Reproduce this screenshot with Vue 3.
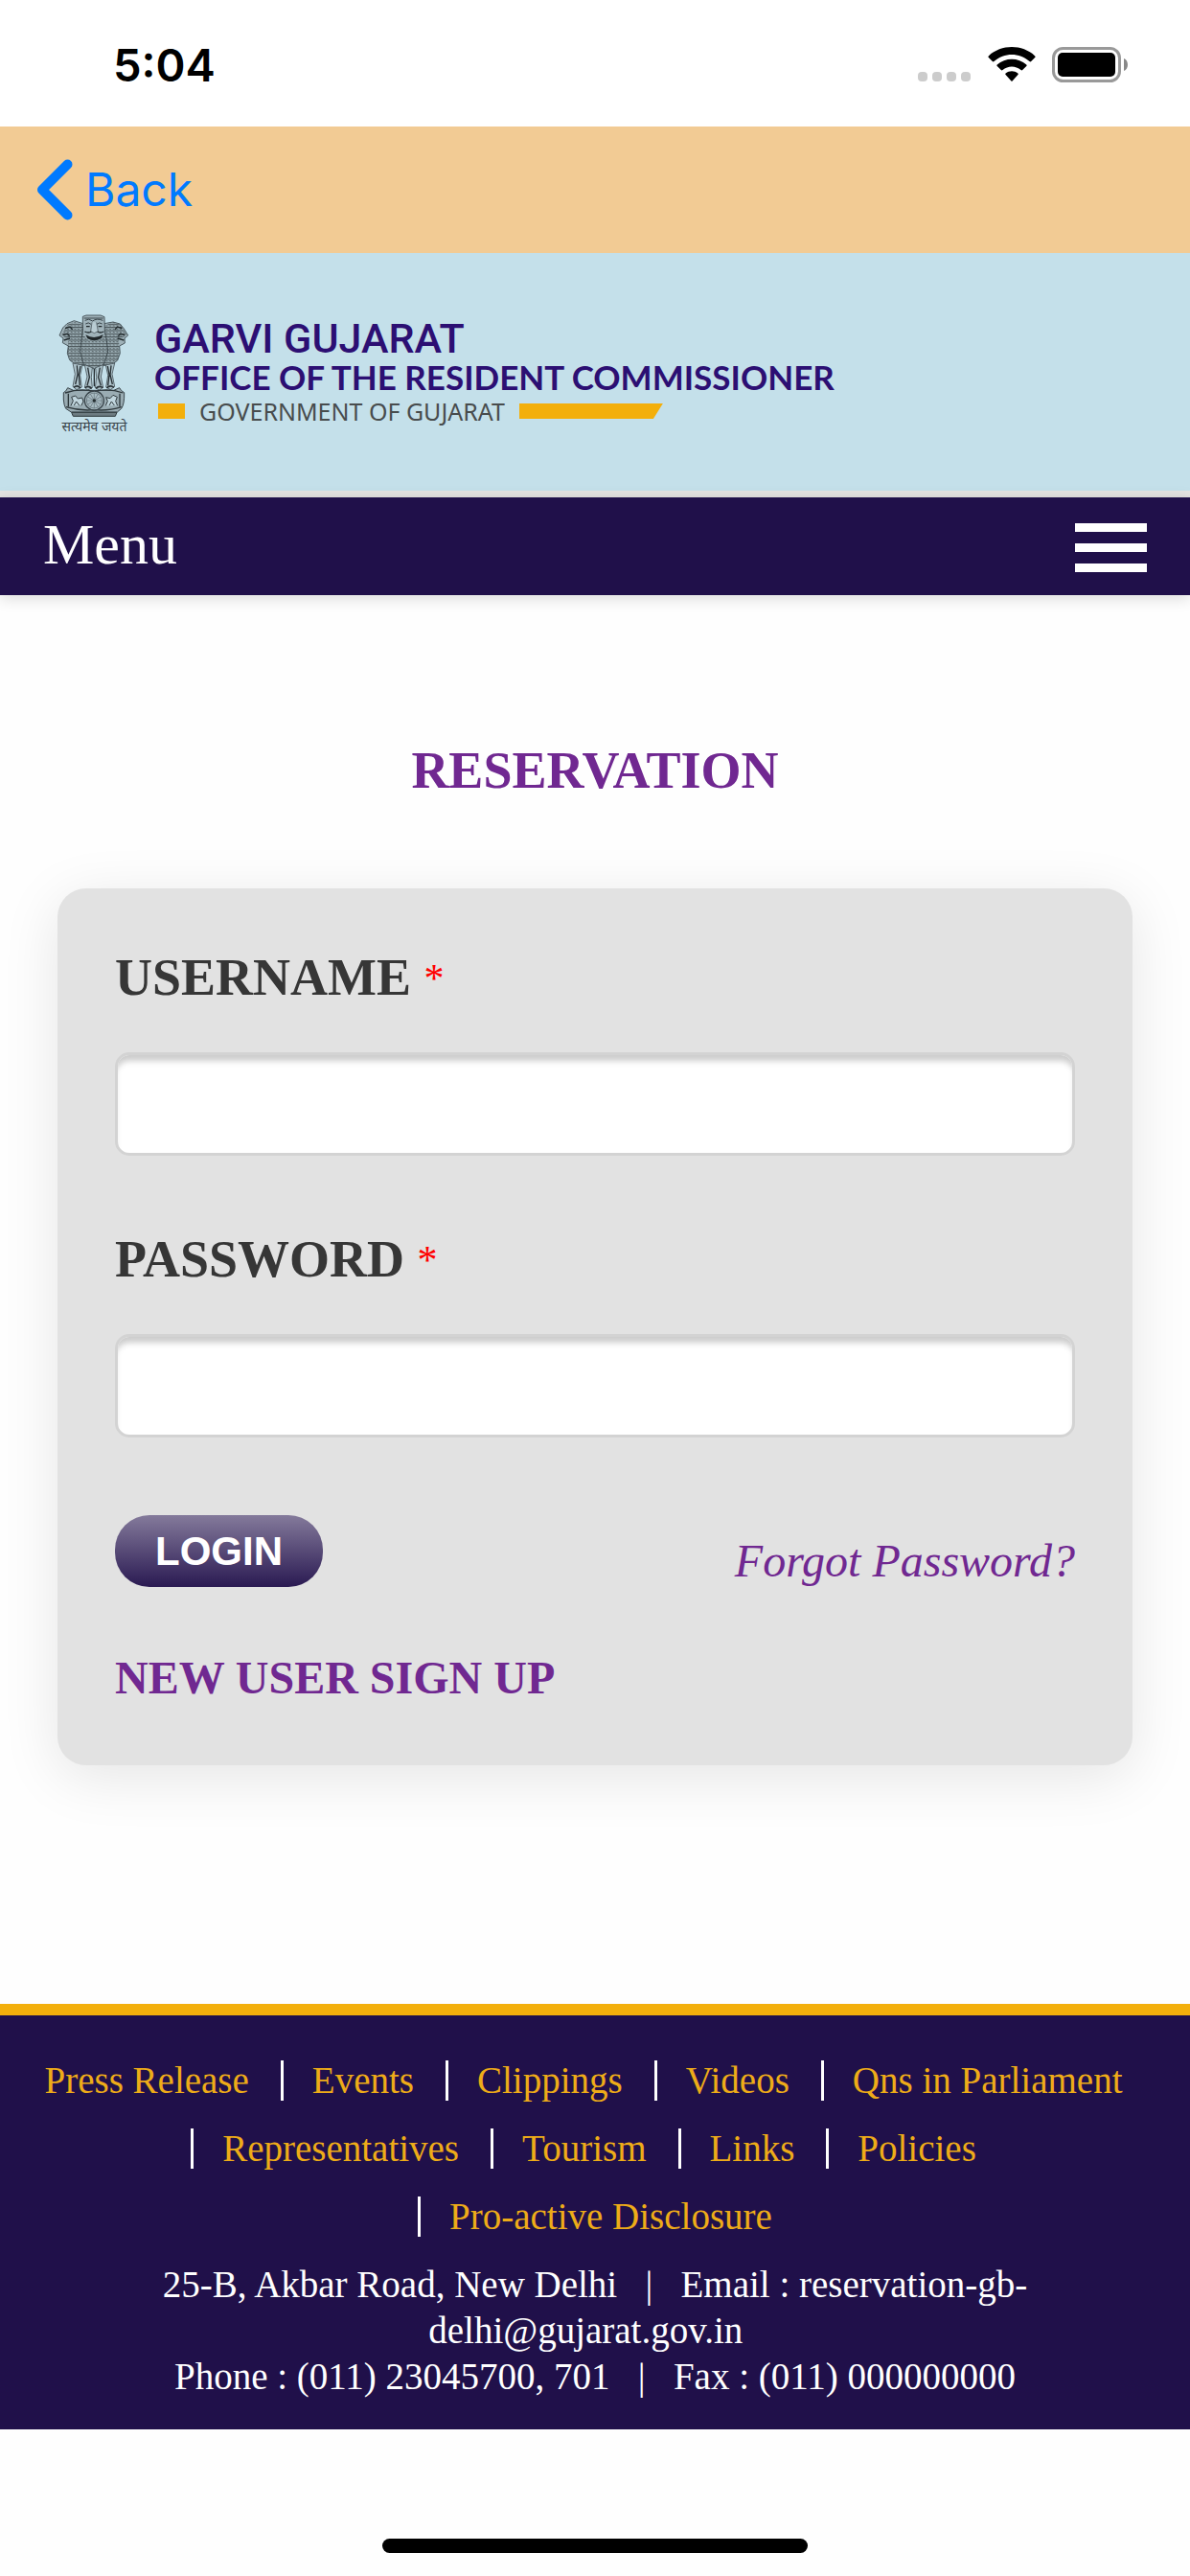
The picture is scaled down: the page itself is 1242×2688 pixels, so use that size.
<template>
  <div class="page">
    <div class="status-bar">
      <span class="time">5:04</span>
      <div class="status-icons">
        <svg class="signal" viewBox="0 0 55 10">
          <rect v-for="n in 4" :key="n" :x="(n - 1) * 15" y="0" width="10" height="10" rx="4" fill="#cccccc"/>
        </svg>
        <svg class="wifi" viewBox="0 0 50 37">
          <path d="M0.8 10.9a1 1 0 0 1 0-1.5C14-3 36-3 49.2 9.400a1 1 0 0 1 0 1.500L45.200 15a1.200 1.200 0 0 1-1.700 0C33 5.600 17 5.600 6.500 15a1.200 1.200 0 0 1-1.700 0z"/>
          <path d="M9.700 20a1.100 1.100 0 0 1 0-1.600C18.300 10.700 31.700 10.700 40.300 18.400a1.100 1.100 0 0 1 0 1.600L36.200 24.100a1.200 1.200 0 0 1-1.700 0C29 19.300 21 19.300 15.500 24.100a1.200 1.200 0 0 1-1.700 0z"/>
          <path d="M18.600 28.900a1 1 0 0 1 0-1.500C22.300 24.600 27.700 24.600 31.400 27.400a1 1 0 0 1 0 1.500L25.600 35.400a0.800 0.800 0 0 1-1.200 0z"/>
        </svg>
        <svg class="battery" viewBox="0 0 80 37">
          <rect x="1.500" y="1.500" width="69" height="34" rx="10" fill="none" stroke="#999999" stroke-width="3"/>
          <rect x="6" y="6" width="60" height="25" rx="5"/>
          <path d="M75 12C80.300 14 80.300 23 75 25z" fill="#888888"/>
        </svg>
      </div>
    </div>

    <div class="nav-bar">
      <button class="back" type="button">
        <svg class="chevron" viewBox="0 0 38 64">
          <path d="M32.500 5.500L6 32L32.500 58.500" fill="none" stroke="#007aff" stroke-width="10" stroke-linecap="round" stroke-linejoin="round"/>
        </svg>
        <span>Back</span>
      </button>
    </div>

    <header class="header">
      <div class="emblem">
        <svg class="lions" viewBox="60 80 231 330">
          <defs>
            <pattern id="curls" width="11" height="10" patternUnits="userSpaceOnUse">
              <path d="M0 2Q3 9 6 2Q8 8 11 3M2 8Q5 12 8 7" fill="none" stroke="#2c3437" stroke-width="2.200"/>
            </pattern>
          </defs>
          <g fill="#9fb2b9" stroke="#39444a" stroke-width="2.500" stroke-linejoin="round">
            <!-- side lions -->
            <path d="M140 112L112 103L90 112L77 125L66 149L78 158L76 172L94 182L91 205L98 226L120 243L145 240Z"/>
            <path d="M206 112L234 107L256 113L268 128L281 149L270 158L271 173L254 182L256 205L248 227L228 243L201 240Z"/>
            <!-- middle lion -->
            <path d="M139 90L150 86L195 86L207 91L208 135L214 165L218 200L205 240L175 254L142 240L131 200L135 160L139 135Z"/>
          </g>
          <path d="M112 106L90 116L72 149L94 160L92 205L100 226L122 241L175 252L226 241L248 226L254 205L252 160L278 149L258 116L234 108L208 118L206 150L190 165L158 165L142 150L139 116Z" fill="url(#curls)"/>
          <path d="M143 95H203M146 102Q158 94 170 104Q182 94 202 102M148 113Q157 106 165 114M183 114Q191 106 200 113" fill="none" stroke="#39444a" stroke-width="3"/>
          <path d="M168 108L164 136L175 142L187 136L182 108" fill="#b9ccd3" stroke="#39444a" stroke-width="2"/>
          <path d="M150 121H161M188 121H199M145 137Q158 143 166 137M185 137Q194 143 205 137" fill="none" stroke="#20282b" stroke-width="4"/>
          <path d="M148 147Q175 163 203 146L198 158Q175 171 154 159Z" fill="#1f2629"/>
          <path d="M84 127L99 122L107 130M77 148L91 144L98 151M80 164L99 158M262 127L248 122L240 130M270 148L257 144L250 151M268 164L248 158" fill="none" stroke="#222b2e" stroke-width="4"/>
          <!-- legs -->
          <g fill="#aec3cb" stroke="#48545a" stroke-width="2.500">
            <path d="M108 236L115 270L108 309L120 319L136 311L131 274L138 242Z"/>
            <path d="M145 241L153 278L145 311L154 320L169 313L166 280L169 250Z"/>
            <path d="M179 250L182 280L178 313L191 320L203 312L196 278L203 241Z"/>
            <path d="M211 242L218 274L212 311L226 319L239 309L231 270L239 236Z"/>
          </g>
          <path d="M121 243L123 272L116 302M132 245L127 272L130 306M155 250L160 280L153 306M175 253V309M193 250L188 280L196 306M217 245L222 272L218 306M228 243L225 272L232 302" fill="none" stroke="#273034" stroke-width="4"/>
          <path d="M111 312Q122 302 132 314M146 313Q157 304 167 315M180 315Q191 304 202 313M214 314Q225 302 237 312" fill="none" stroke="#273034" stroke-width="5"/>
          <!-- abacus with the wheel -->
          <path d="M92 313Q88 324 79 328V350Q80 367 86 378L103 389H247L260 378Q270 364 269 328Q258 323 254 313L236 321H110Z" fill="#9aacb3" stroke="#39444a" stroke-width="3"/>
          <path d="M84 329Q130 313 175 324Q222 313 265 329M87 373Q130 386 175 382Q220 386 260 373M94 331V372M255 331V372" fill="none" stroke="#2e383c" stroke-width="4"/>
          <circle cx="175" cy="353" r="30" fill="#a9bcc3" stroke="#39444a" stroke-width="4"/>
          <circle cx="175" cy="353" r="24" fill="none" stroke="#56636a" stroke-width="2"/>
          <path v-for="n in 12" :key="n" d="M175 353V329" stroke="#64727a" stroke-width="2" :transform="`rotate(${n * 30} 175 353)`"/>
          <circle cx="175" cy="353" r="5" fill="#252e31"/>
          <path d="M102 369L109 354L104 342L116 338L124 347L137 344L141 356L134 369M112 368L119 356L129 369" fill="#c0d5dd" stroke="#303a3e" stroke-width="3"/>
          <path d="M211 369L217 355L212 343L225 346L234 336L247 342L242 355L248 369M222 368L229 356L238 368" fill="#c0d5dd" stroke="#303a3e" stroke-width="3"/>
          <path d="M104 390H246L241 402H109Z" fill="#6d7b81" stroke="#2e383c" stroke-width="3"/>
        </svg>
        <span class="motto">सत्यमेव जयते</span>
      </div>
      <div class="brand">
        <div class="brand-name">GARVI GUJARAT</div>
        <div class="brand-office">OFFICE OF THE RESIDENT COMMISSIONER</div>
        <div class="brand-gov">
          <span class="block"></span>
          <span>GOVERNMENT OF GUJARAT</span>
          <span class="ribbon"></span>
        </div>
      </div>
    </header>

    <nav class="menu">
      <span>Menu</span>
      <button class="hamburger" type="button" aria-label="Menu" @click="menuOpen = !menuOpen">
        <i></i>
        <i></i>
        <i></i>
      </button>
    </nav>

    <main class="main">
      <h1>RESERVATION</h1>
      <form class="card" @submit.prevent>
        <div class="form-item">
          <label for="username">USERNAME <span class="required">*</span></label>
          <input id="username" type="text" v-model="username"/>
        </div>
        <div class="form-item">
          <label for="password">PASSWORD <span class="required">*</span></label>
          <input id="password" type="password" v-model="password"/>
        </div>
        <div class="actions">
          <button class="login" type="submit">LOGIN</button>
          <a class="forgot" href="#">Forgot Password?</a>
        </div>
        <a class="sign-up" href="#">NEW USER SIGN UP</a>
      </form>
    </main>

    <footer class="footer">
      <ul class="links">
        <li v-for="link in links" :key="link"><a href="#">{{ link }}</a></li>
      </ul>
      <p class="address">
        25-B, Akbar Road, New Delhi &nbsp; | &nbsp; Email : reservation-gb-delhi@gujarat.gov.in&nbsp;&nbsp;<br>
        Phone : (011) 23045700, 701 &nbsp; | &nbsp; Fax : (011) 000000000
      </p>
    </footer>

    <div class="home-indicator"></div>
  </div>
</template>

<script setup>
import {ref} from 'vue'

const username = ref('')
const password = ref('')
const menuOpen = ref(false)

const links = [
  'Press Release',
  'Events',
  'Clippings',
  'Videos',
  'Qns in Parliament',
  'Representatives',
  'Tourism',
  'Links',
  'Policies',
  'Pro-active Disclosure'
]
</script>

<style>
body {
  margin: 0;
  background: #fefefe;
}
</style>

<style scoped>
.page {
  display: flex;
  flex-direction: column;
  min-height: 100vh;
  font-family: "Liberation Serif", "Times New Roman", serif;
}

a {
  text-decoration: none;
}

button {
  border: none;
  padding: 0;
  background: none;
  cursor: pointer;
}

.status-bar {
  display: flex;
  justify-content: space-between;
  height: 132px;
  padding: 0 64px 0 118px;
  box-sizing: border-box;
  background: #ffffff;
}

.time {
  font: 600 47px/136px Inter, sans-serif;
}

.status-icons {
  display: flex;
  align-items: flex-end;
  height: 86px;
}

.signal {
  width: 55px;
  height: 10px;
  margin: 0 18px 1px 0;
}

.wifi {
  width: 50px;
  height: 37px;
  margin-right: 17px;
}

.battery {
  width: 80px;
  height: 37px;
}

.nav-bar {
  display: flex;
  align-items: center;
  height: 132px;
  padding-left: 38px;
  background: #f2cb94;
}

.back {
  display: flex;
  align-items: center;
  gap: 13px;
  color: #007aff;
  font: 400 48px/60px Inter, sans-serif;
}

.chevron {
  width: 38px;
  height: 64px;
}

.header {
  display: flex;
  gap: 24px;
  padding: 63px 60px 60px;
  border-bottom: 7px solid #e4e3e2;
  background: #c4e0ea;
}

.emblem {
  display: flex;
  flex-direction: column;
  align-items: center;
  width: 77px;
}

.lions {
  width: 77px;
  height: 110px;
}

.motto {
  color: #39444a;
  font: 400 14px/15px "Noto Sans", "Noto Sans Devanagari", sans-serif;
  white-space: nowrap;
}

.brand {
  padding-top: 4px;
  color: #2c0f73;
  white-space: nowrap;
}

.brand-name {
  font: 500 43px/44px Roboto, sans-serif;
}

.brand-office {
  font: 700 35px/36px Lato, sans-serif;
}

.brand-gov {
  display: flex;
  align-items: center;
  gap: 15px;
  padding-left: 4px;
  color: #484c4d;
  font: 400 25px/36px "Noto Sans", sans-serif;
}

.block {
  width: 28px;
  height: 16px;
  background: #f3af0b;
}

.ribbon {
  width: 150px;
  height: 16px;
  background: #f3af0b;
  clip-path: polygon(0 0, 100% 0, 140px 100%, 0 100%);
}

.menu {
  display: flex;
  justify-content: space-between;
  align-items: flex-start;
  height: 102px;
  padding: 0 45px;
  background: #20104a;
  box-shadow: 0 3px 15px rgba(0, 0, 0, 0.15);
  color: #ffffff;
  font-size: 60px;
  line-height: 98px;
}

.hamburger {
  display: flex;
  flex-direction: column;
  gap: 12px;
  width: 75px;
  margin-top: 27px;
}

.hamburger i {
  width: 100%;
  height: 9px;
  background: #ffffff;
}

.main {
  padding: 153px 60px 249px;
}

h1 {
  margin: 0 0 93px;
  color: #702891;
  font-size: 54px;
  line-height: 60px;
  text-align: center;
}

.card {
  padding: 63px 60px 64px;
  border-radius: 30px;
  background: #e2e2e2;
  box-shadow: 0 12px 60px rgba(0, 0, 0, 0.1);
}

.form-item {
  margin-bottom: 78px;
}

label {
  display: block;
  margin-bottom: 48px;
  color: #363636;
  font-size: 54px;
  font-weight: 700;
  line-height: 60px;
}

.required {
  color: #ff0000;
  font-size: 42px;
  font-weight: 400;
  line-height: 1;
  vertical-align: 3px;
}

input {
  display: block;
  width: 100%;
  height: 108px;
  padding: 0 24px;
  box-sizing: border-box;
  border: 3px solid #d3d3d3;
  border-radius: 15px;
  background: #ffffff;
  box-shadow: inset 0 9px 6px -3px #cccccc;
  font: 48px "Liberation Serif", serif;
  outline: none;
}

.actions {
  display: flex;
  justify-content: space-between;
  align-items: flex-end;
  margin: 81px 0 68px;
}

.login {
  height: 75px;
  padding: 0 42px;
  border-radius: 36px;
  background: linear-gradient(#847a9b, #2a1a52);
  color: #ffffff;
  font: 700 42px/75px "Liberation Sans", Arial, sans-serif;
}

.forgot {
  color: #702891;
  font-size: 48px;
  font-style: italic;
  line-height: 54px;
}

.sign-up {
  display: block;
  color: #702891;
  font-size: 48px;
  font-weight: 700;
  line-height: 54px;
}

.footer {
  padding: 47px 30px 31px;
  border-top: 12px solid #f3af0b;
  background: #20104a;
  font-size: 39px;
  text-align: center;
}

.links {
  display: flex;
  flex-wrap: wrap;
  justify-content: center;
  gap: 29px 9px;
  margin: 0 0 26px;
  padding: 0;
  list-style: none;
  line-height: 42px;
}

.links li {
  padding: 0 24px 0 30px;
  border-left: 3px solid #ffffff;
}

.links li:first-child {
  padding-left: 0;
  border-left: none;
}

.links li:last-child {
  padding-right: 0;
}

.links a {
  color: #eeac18;
}

.address {
  margin: 0 auto;
  padding: 0 90px;
  color: #ffffff;
  line-height: 48px;
}

.home-indicator {
  width: 444px;
  height: 15px;
  margin: auto auto 24px;
  border-radius: 8px;
  background: #000000;
}
</style>
